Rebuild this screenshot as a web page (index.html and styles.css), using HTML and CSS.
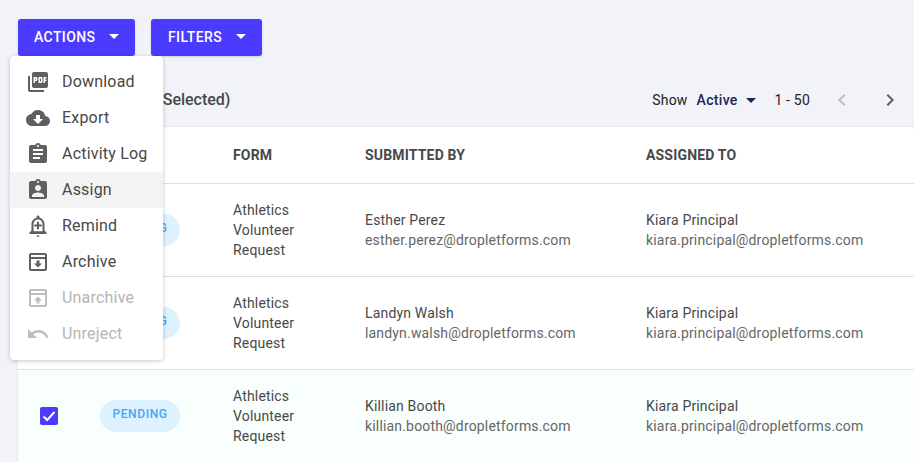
FILE: index.html
```html
<!DOCTYPE html>
<html lang="en">
<head>
    <meta charset="UTF-8">
    <meta name="viewport" content="width=device-width, initial-scale=1.0">
    <title>Submissions</title>
    <link rel="stylesheet" href="styles.css">
</head>
<body>
    <div class="page">
        <div class="toolbar">
            <button class="btn btn-actions"><span class="btn-label">ACTIONS</span> <span class="caret"></span></button>
            <button class="btn btn-filters"><span class="btn-label">FILTERS</span> <span class="caret"></span></button>
        </div>

        <!-- Actions dropdown, open -->
        <ul class="menu">
            <li class="menu-item">
                <svg class="menu-icon" viewBox="0 0 24 24"><path d="M20 2H8c-1.1 0-2 .9-2 2v12c0 1.1.9 2 2 2h12c1.1 0 2-.9 2-2V4c0-1.1-.9-2-2-2zm-8.5 7.5c0 .83-.67 1.5-1.5 1.5H9v2H7.5V7H10c.83 0 1.5.67 1.5 1.5v1zm5 2c0 .83-.67 1.5-1.5 1.5h-2.5V7H15c.83 0 1.5.67 1.5 1.5v3zm4-3H19v1h1.5V11H19v2h-1.5V7h3v1.5zM9 9.5h1v-1H9v1zM4 6H2v14c0 1.1.9 2 2 2h14v-2H4V6zm10 5.5h1v-3h-1v3z"/></svg>
                <span class="menu-label">Download</span>
            </li>
            <li class="menu-item">
                <svg class="menu-icon" viewBox="0 0 24 24"><path d="M19.35 10.04C18.67 6.59 15.64 4 12 4 9.11 4 6.6 5.64 5.35 8.04 2.34 8.36 0 10.91 0 14c0 3.31 2.69 6 6 6h13c2.76 0 5-2.24 5-5 0-2.64-2.05-4.78-4.65-4.96zM17 13l-5 5-5-5h3V9h4v4h3z"/></svg>
                <span class="menu-label">Export</span>
            </li>
            <li class="menu-item">
                <svg class="menu-icon" viewBox="0 0 24 24"><path d="M19 3h-4.18C14.4 1.84 13.3 1 12 1c-1.3 0-2.4.84-2.82 2H5c-1.1 0-2 .9-2 2v14c0 1.1.9 2 2 2h14c1.1 0 2-.9 2-2V5c0-1.1-.9-2-2-2zm-7 0c.55 0 1 .45 1 1s-.45 1-1 1-1-.45-1-1 .45-1 1-1zm2 14H7v-2h7v2zm3-4H7v-2h10v2zm0-4H7V7h10v2z"/></svg>
                <span class="menu-label">Activity Log</span>
            </li>
            <li class="menu-item menu-item-hover">
                <svg class="menu-icon" viewBox="0 0 24 24"><path d="M19 3h-4.18C14.4 1.84 13.3 1 12 1c-1.3 0-2.4.84-2.82 2H5c-1.1 0-2 .9-2 2v14c0 1.1.9 2 2 2h14c1.1 0 2-.9 2-2V5c0-1.1-.9-2-2-2zm-7 0c.55 0 1 .45 1 1s-.45 1-1 1-1-.45-1-1 .45-1 1-1zm0 4c1.66 0 3 1.34 3 3s-1.34 3-3 3-3-1.34-3-3 1.34-3 3-3zm6 12H6v-1.4c0-2 4-3.1 6-3.1s6 1.1 6 3.1V19z"/></svg>
                <span class="menu-label">Assign</span>
            </li>
            <li class="menu-item">
                <svg class="menu-icon" viewBox="0 0 24 24"><path d="M12 1.5c-.8 0-1.5.7-1.5 1.5v.7C7.6 4.4 5.5 7 5.5 10v6.5l-2 2V20h17v-1.5l-2-2V10c0-3-2.1-5.6-5-6.3V3c0-.8-.7-1.5-1.500-1.500zm0 4c2.500 0 4.500 2 4.500 4.500v7.300h-9V10c0-2.500 2-4.500 4.500-4.500zM11 7.800v2.700H8.300v2H11v2.700h2v-2.700h2.700v-2H13V7.800h-2zM10.500 21.500c0 .8.7 1.500 1.500 1.500s1.500-.7 1.500-1.500h-3z"/></svg>
                <span class="menu-label">Remind</span>
            </li>
            <li class="menu-item">
                <svg class="menu-icon" viewBox="0 0 24 24"><path d="M5 3C3.900 3 3 3.900 3 5v14c0 1.100.9 2 2 2h14c1.100 0 2-.9 2-2V5c0-1.100-.9-2-2-2H5zm0 2h14v2H5V5zm0 4h14v10H5V9zm5.500 1.500v3H8l4 4 4-4h-2.500v-3h-3z"/></svg>
                <span class="menu-label">Archive</span>
            </li>
            <li class="menu-item menu-item-disabled">
                <svg class="menu-icon" viewBox="0 0 24 24"><path d="M5 3C3.900 3 3 3.900 3 5v14c0 1.100.9 2 2 2h14c1.100 0 2-.9 2-2V5c0-1.100-.9-2-2-2H5zm0 2h14v2H5V5zm0 4h14v10H5V9zm7 1.500-4 4h2.500v3h3v-3H16l-4-4z"/></svg>
                <span class="menu-label">Unarchive</span>
            </li>
            <li class="menu-item menu-item-disabled">
                <svg class="menu-icon" viewBox="0 0 24 24"><path d="M12.500 8c-2.650 0-5.050.99-6.900 2.600L2 7v9h9l-3.620-3.620c1.390-1.160 3.160-1.880 5.120-1.880 3.540 0 6.550 2.310 7.600 5.500l2.370-.78C21.080 11.030 17.150 8 12.500 8z"/></svg>
                <span class="menu-label">Unreject</span>
            </li>
        </ul>

        <div class="status-bar">
            <div class="selected-count">All Submissions (1 Selected)</div>
            <div class="pager">
                <span class="show-label">Show</span>
                <span class="show-value">Active <span class="caret caret-dark"></span></span>
                <span class="page-range">1 - 50</span>
                <svg class="chevron chevron-off" viewBox="0 0 24 24"><path d="M15.410 7.410 14 6l-6 6 6 6 1.410-1.410L10.830 12z"/></svg>
                <svg class="chevron" viewBox="0 0 24 24"><path d="M10 6 8.590 7.410 13.170 12l-4.580 4.590L10 18l6-6z"/></svg>
            </div>
        </div>

        <div class="table">
            <div class="row row-head">
                <div></div>
                <div></div>
                <div>FORM</div>
                <div>SUBMITTED BY</div>
                <div>ASSIGNED TO</div>
            </div>
            <div class="row">
                <div class="cell-check"><span class="checkbox"></span></div>
                <div><span class="pill">PENDING</span></div>
                <div class="form-name">Athletics<br>Volunteer<br>Request</div>
                <div class="person">
                    <div>Esther Perez</div>
                    <div class="person-mail">esther.perez@dropletforms.com</div>
                </div>
                <div class="person">
                    <div>Kiara Principal</div>
                    <div class="person-mail">kiara.principal@dropletforms.com</div>
                </div>
            </div>
            <div class="row">
                <div class="cell-check"><span class="checkbox"></span></div>
                <div><span class="pill">PENDING</span></div>
                <div class="form-name">Athletics<br>Volunteer<br>Request</div>
                <div class="person">
                    <div>Landyn Walsh</div>
                    <div class="person-mail">landyn.walsh@dropletforms.com</div>
                </div>
                <div class="person">
                    <div>Kiara Principal</div>
                    <div class="person-mail">kiara.principal@dropletforms.com</div>
                </div>
            </div>
            <div class="row row-selected">
                <div class="cell-check">
                    <span class="checkbox checkbox-on">
                        <svg viewBox="0 0 18 18"><path d="M3.500 9.500 7.200 13l7.300-8" fill="none" stroke="#fff" stroke-width="2"/></svg>
                    </span>
                </div>
                <div><span class="pill">PENDING</span></div>
                <div class="form-name">Athletics<br>Volunteer<br>Request</div>
                <div class="person">
                    <div>Killian Booth</div>
                    <div class="person-mail">killian.booth@dropletforms.com</div>
                </div>
                <div class="person">
                    <div>Kiara Principal</div>
                    <div class="person-mail">kiara.principal@dropletforms.com</div>
                </div>
            </div>
        </div>
    </div>
</body>
</html>
```

FILE: styles.css
```css
* {
    box-sizing: border-box;
}

html, body {
    height: 100%;
}

body {
    margin: 0;
    font-family: Roboto, Arial, sans-serif;
    background-color: #f1f3f8;
    color: #484848;
    overflow: hidden;
}

.page {
    position: relative;
    padding: 19px 0 0 18px;
}

.toolbar {
    display: flex;
    gap: 16px;
}

.btn {
    display: flex;
    align-items: center;
    justify-content: space-between;
    height: 37px;
    padding: 0 16px 2px;
    background-color: #4b3bff;
    border: none;
    border-radius: 3px;
    box-shadow: 0 1px 2px rgba(0, 0, 0, 0.15);
    color: #fff;
    font-family: inherit;
    font-size: 14px;
    font-weight: 500;
    letter-spacing: 0.4px;
}

.btn-actions {
    width: 117px;
}

.btn-filters {
    width: 111px;
    padding-left: 17px;
}

.caret {
    display: inline-block;
    width: 0;
    height: 0;
    border-left: 5px solid transparent;
    border-right: 5px solid transparent;
    border-top: 5px solid #fff;
}

.caret-dark {
    border-top-color: #1f2555;
    margin-left: 5px;
    vertical-align: 2px;
}

.menu {
    position: absolute;
    top: 56px;
    left: 10px;
    z-index: 2;
    width: 153px;
    margin: 0;
    padding: 8px 0;
    list-style: none;
    background-color: #fff;
    border-radius: 4px;
    box-shadow: 0 1px 4px rgba(0, 0, 0, 0.22);
}

.menu-item {
    display: flex;
    align-items: center;
    gap: 12px;
    height: 36px;
    padding-left: 16px;
    font-size: 16px;
    letter-spacing: 0.2px;
}

.menu-label {
    margin-bottom: 2px;
}

.menu-icon {
    flex: none;
    width: 24px;
    height: 24px;
    fill: #5f5f5f;
}

.menu-item-hover {
    background-color: #f3f3f3;
}

.menu-item-disabled {
    color: #b5b5b5;
}

.menu-item-disabled .menu-icon {
    fill: #bdbdbd;
}

.status-bar {
    display: flex;
    align-items: center;
    justify-content: space-between;
    height: 71px;
    padding-top: 16px;
}

.selected-count {
    padding-left: 7px;
    font-size: 16px;
    font-weight: 500;
}

.pager {
    display: flex;
    align-items: center;
    font-size: 14px;
    letter-spacing: 0.2px;
    color: #212121;
    padding-right: 12px;
}

.show-value {
    margin-left: 9px;
    color: #1f2555;
    font-weight: 500;
    letter-spacing: 0.3px;
}

.page-range {
    margin-left: 18px;
    margin-right: 20px;
}

.chevron {
    width: 24px;
    height: 24px;
    fill: #5f5f5f;
}

.chevron-off {
    fill: #bdbdbd;
    margin-right: 24px;
}

.table {
    background-color: #fff;
    border-radius: 4px 4px 0 0;
    box-shadow: 0 0 2px rgba(0, 0, 0, 0.15);
}

.row {
    display: grid;
    grid-template-columns: 82px 133px 132px 281px 1fr;
    align-items: center;
    height: 93px;
    border-bottom: 1px solid #e0e0e0;
    font-size: 14px;
    letter-spacing: 0.17px;
}

.row-head {
    height: 57px;
    font-weight: 700;
    letter-spacing: 0.17px;
}

.row-selected {
    background-color: #f8fffd;
    border-bottom-color: transparent;
}

.cell-check {
    padding-left: 22px;
}

.checkbox {
    display: block;
    width: 18px;
    height: 18px;
    border: 2px solid #757575;
    border-radius: 2px;
}

.checkbox-on {
    background-color: #4b3bff;
    border: none;
}

.checkbox-on svg {
    display: block;
}

.pill {
    display: inline-block;
    width: 80px;
    height: 32px;
    line-height: 28px;
    text-align: center;
    border-radius: 16px;
    background-color: #def1ff;
    color: #48a6f8;
    font-size: 12px;
    font-weight: 500;
    letter-spacing: 0.6px;
}

.form-name {
    line-height: 20px;
}

.person {
    line-height: 20px;
}

.person-mail {
    color: #666;
}
```
